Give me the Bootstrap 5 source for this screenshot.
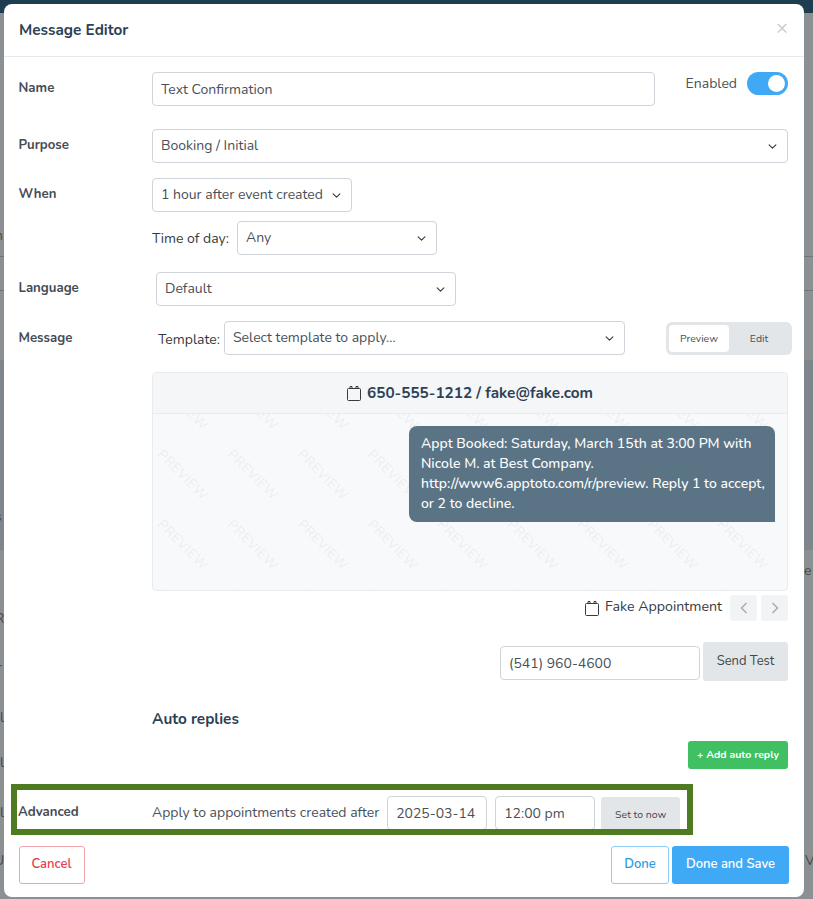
<!DOCTYPE html>
<html lang="en"><head><meta charset="utf-8"><title>Message Editor</title>
<link href="https://cdn.jsdelivr.net/npm/bootstrap@5.3.0/dist/css/bootstrap.min.css" rel="stylesheet">
<style>
html,body{height:899px;overflow:hidden}
body{background:#8d9093;font-family:"Nunito","Lato","Noto Sans",sans-serif;font-size:14px;color:#343a40;padding-top:4px;position:relative}
.backdrop{position:absolute;inset:0;overflow:hidden}
.bd-navy{position:absolute;left:0;right:0;top:0;height:13px;background:#1f3d50}
.bd-band{position:absolute;left:0;right:0;background:#7f868b}
.bd-line{position:absolute;left:0;right:0;height:1px;background:#6f7579}
.edgetxt{position:absolute;font-size:14px;line-height:16px;color:#45494c}
.edit-win{position:relative;margin:0 9px 0 4px;background:#fff;border-radius:8px;height:893px}
.edit-head{height:53px;border-bottom:1px solid #e6e8ea;padding:0 15px;display:flex;align-items:center;justify-content:space-between}
.edit-head h5{font-size:15.300px;font-weight:700;color:#2c4155;margin:0}
.x-btn{font-size:20px;color:#c7cbce;line-height:1;margin-top:-4px;margin-right:1px;background:none;border:0;padding:0}
.edit-body{padding:15px 16px 0 14.500px}
.lab{width:133.500px;flex:none;font-weight:700;font-size:13.200px;color:#454c53}
.lab.pt-top{padding-top:7px}
.fld{height:34px;border:1px solid #ced4da;border-radius:4px;font-size:14px;color:#495057;padding:0 8px;background-color:#fff;line-height:32px;box-shadow:none}
.form-select.fld{background-position:right 9px center;background-size:11px 9px;padding-right:24px}
.toggle-track{width:41px;height:23px;border-radius:12px;background:#3fa9f5;position:relative;display:block;flex:none}
.toggle-knob{position:absolute;right:3px;top:3px;width:17px;height:17px;background:#fff;border-radius:50%}
.seg{background:#e3e6e9;border-radius:6px;padding:3px;width:126px;height:33px;display:flex;font-size:10.500px}
.seg span{flex:1;text-align:center;line-height:27px;color:#495057;border-radius:4px}
.seg .on{background:#fff}
.pv-box{border:1px solid #e9ecef;border-radius:4px;background:#f8f9fa;height:219px;overflow:hidden}
.pv-head{height:41px;border-bottom:1px solid #e9ecef;font-size:15.300px;font-weight:700;color:#2c4155;background:#f5f6f7;gap:6px}
.pv-body{position:relative;padding:12px 12px;height:176px;overflow:hidden}
.wm-layer{position:absolute;left:0;top:0;width:100%;height:100%}
.wm-text{font-size:13.500px;fill:#ebedef;letter-spacing:.6px}
.bubble{position:relative;background:#5b7485;color:#fff;width:366px;border-radius:8px 8px 0 8px;padding:8px 8px 8px 12px;line-height:20px;font-size:14px;margin-left:auto;font-weight:500}
.nav-sq{width:27px;height:26px;background:#f1f3f4;border-radius:3px;display:flex;align-items:center;justify-content:center}
.btn-soft{background:#e3e6e9;color:#3f474e;border:0;border-radius:3px;font-size:13px}
.adv-frame{border:6px solid #4e7a21;margin-left:-7.500px;width:682px;height:51px;padding:0 0 0 1px;overflow:hidden}
.adv-field{width:100px;margin-top:0;flex:none}
.act{border-radius:3px;font-size:13px;font-weight:600;height:38px;padding:0}
.green{background:#40bf63;color:#fff;font-size:10.500px;font-weight:700;border-radius:3px;width:100px;height:28px;border:0}
.auto-title{font-size:15.300px;font-weight:700;color:#2c4155;margin-top:27px;height:22px}
.cal-ic{flex:none}
.cal-tight{margin-right:-2px}
</style></head><body>
<div class="backdrop">
<div class="bd-navy"></div>
<div class="bd-band" style="top:360px;height:190px"></div>
<div class="bd-line" style="top:256px"></div><div class="bd-line" style="top:290px"></div>
<span class="edgetxt" style="left:-5px;top:228px">n</span>
<span class="edgetxt" style="left:-5px;top:509px">s</span>
<span class="edgetxt" style="left:-5px;top:611px">R</span>
<span class="edgetxt" style="left:-3px;top:660px">r</span>
<span class="edgetxt" style="left:0;top:710px">l</span>
<span class="edgetxt" style="left:0;top:755px">l</span>
<span class="edgetxt" style="left:0;top:805px">l</span>
<span class="edgetxt" style="left:-6px;top:853px">U</span>
<span class="edgetxt" style="left:804px;top:563px">e</span>
<span class="edgetxt" style="left:805px;top:853px">V</span>
</div>
<div class="edit-win">
<div class="edit-head"><h5>Message Editor</h5><button class="x-btn" type="button">×</button></div>
<div class="edit-body">
<div class="d-flex" style="height:57px"><div class="lab pt-top">Name</div><input class="fld" style="width:503px" value="Text Confirmation"><div class="ms-auto d-flex align-items-start" style="gap:10px"><span style="font-size:14px;line-height:23px;color:#495057">Enabled</span><span class="toggle-track"><span class="toggle-knob"></span></span></div></div>
<div class="d-flex" style="height:49px"><div class="lab pt-top">Purpose</div><select class="form-select fld flex-grow-1" style="width:auto"><option>Booking / Initial</option></select></div>
<div class="d-flex" style="height:43px"><div class="lab pt-top">When</div><select class="form-select fld" style="width:200px"><option>1 hour after event created</option></select></div>
<div class="d-flex align-items-center" style="height:51px"><div class="lab"></div><div class="d-flex align-items-center" style="margin-top:-17px;gap:8px"><span>Time of day:</span><select class="form-select fld" style="width:200px"><option>Any</option></select></div></div>
<div class="d-flex" style="height:49px"><div class="lab pt-top">Language</div><select class="form-select fld" style="width:300px;margin-left:4px"><option>Default</option></select></div>
<div class="d-flex" style="height:51px"><div class="lab pt-2">Message</div><div class="d-flex align-items-start" style="margin-left:6px"><span class="pt-2 me-1">Template:</span><select class="form-select fld" style="width:401px"><option>Select template to apply…</option></select></div><div class="seg ms-auto" style="margin-right:-4px;margin-top:1px"><span class="on">Preview</span><span>Edit</span></div></div>
<div style="margin-left:133.500px">
<div class="pv-box"><div class="pv-head d-flex align-items-center justify-content-center"><svg class="cal-ic" width="14" height="15" viewBox="0 0 14 15" fill="none" stroke="#343a40"><rect x=".5" y="2.500" width="13" height="12" rx="1"/><path d="M3 2.500V.5h2v2M9 2.500V.5h2v2"/></svg>650-555-1212 / fake@fake.com</div>
<div class="pv-body"><svg class="wm-layer" aria-hidden="true"><defs><pattern id="wm" width="70" height="70" patternUnits="userSpaceOnUse" patternTransform="translate(-1 35)"><text class="wm-text" transform="translate(5 6) rotate(45)">PREVIEW</text></pattern></defs><rect width="100%" height="100%" fill="url(#wm)"/></svg><div class="bubble">Appt Booked: Saturday, March 15th at 3:00 PM with Nicole M. at Best Company. http://www6.apptoto.com/r/preview. Reply 1 to accept, or 2 to decline.</div></div></div>
<div class="d-flex justify-content-end align-items-center gap-2" style="margin-top:4px;height:26px"><svg class="cal-ic cal-tight" width="14" height="15" viewBox="0 0 14 15" fill="none" stroke="#343a40"><rect x=".5" y="2.500" width="13" height="12" rx="1"/><path d="M3 2.500V.5h2v2M9 2.500V.5h2v2"/></svg><span style="font-size:14.200px;margin-top:-2px">Fake Appointment</span><span class="d-flex gap-1"><span class="nav-sq"><svg width="8" height="12" viewBox="0 0 8 12" fill="none" stroke="#a9adb1" stroke-width="1.500"><path d="M6.500 1 1.500 6l5 5"/></svg></span><span class="nav-sq"><svg width="8" height="12" viewBox="0 0 8 12" fill="none" stroke="#a9adb1" stroke-width="1.500"><path d="M1.500 1l5 5-5 5"/></svg></span></span></div>
<div class="d-flex justify-content-end align-items-start" style="margin-top:21px;gap:3px"><input class="fld" style="width:200px;margin-top:4px" value="(541) 960-4600"><button class="btn-soft" style="width:85px;height:39px;padding-bottom:1px">Send Test</button></div>
<div class="auto-title">Auto replies</div>
<div class="d-flex justify-content-end" style="margin-top:11px"><button class="green">+ Add auto reply</button></div>
</div>
<div class="adv-frame d-flex align-items-start" style="margin-top:15px"><div class="lab" style="width:134px;padding-top:13px">Advanced</div><span class="text-nowrap" style="padding-top:12px;font-size:14px;color:#495057">Apply to appointments created after</span><input class="fld adv-field" style="margin:6px 0 0 8px" value="2025-03-14"><input class="fld adv-field" style="margin:6px 0 0 8px" value="12:00 pm"><button class="btn-soft" style="width:79px;height:34px;font-size:10.500px;margin:7px 0 0 6px;padding-top:3px">Set to now</button></div>
<div class="d-flex" style="margin-top:11px;margin-right:-1px"><button class="act btn" style="width:66px;border:1px solid #f0a5ac;color:#e5404d;background:#fff">Cancel</button><button class="act btn ms-auto" style="width:58px;border:1px solid #8fcdf5;color:#2f9be0;background:#fff">Done</button><button class="act btn" style="width:117px;margin-left:3px;background:#3fa9f5;color:#fff;border:0">Done and Save</button></div>
</div></div>
<script src="https://cdn.jsdelivr.net/npm/bootstrap@5.3.0/dist/js/bootstrap.bundle.min.js"></script>
</body></html>
